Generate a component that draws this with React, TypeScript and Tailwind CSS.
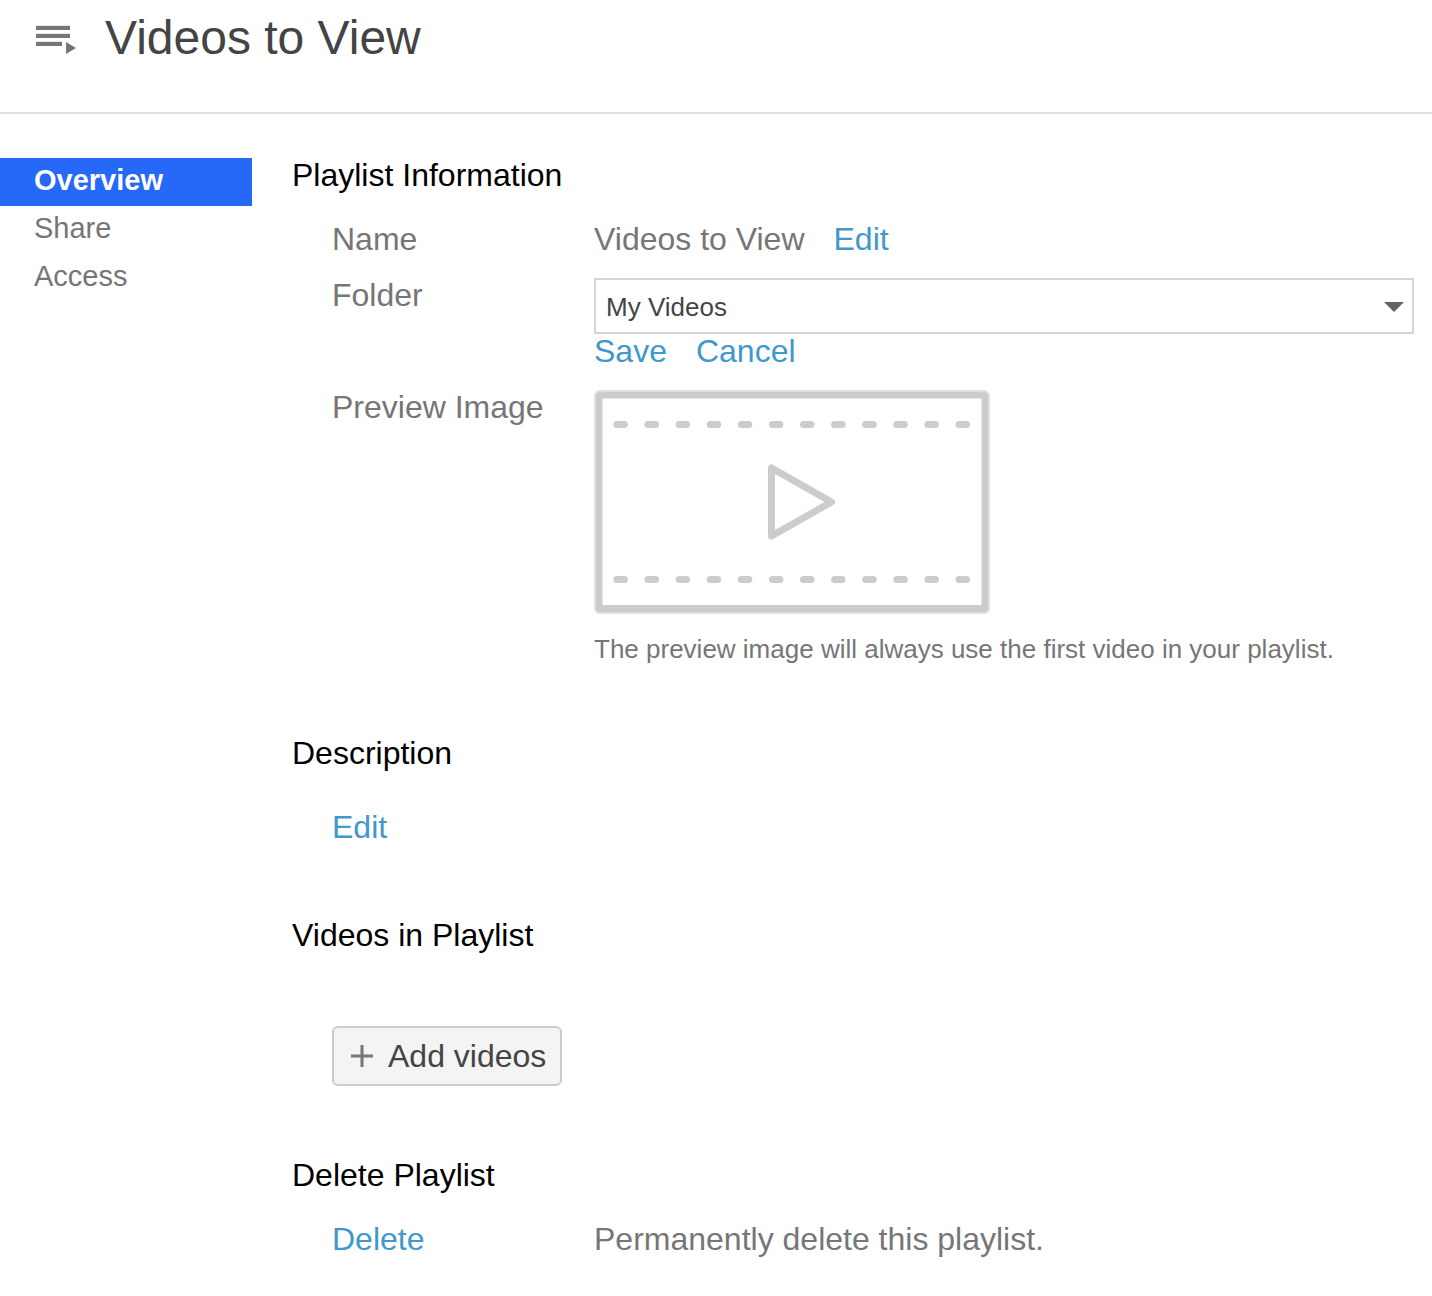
import type { ReactNode } from "react";

const navItems = ["Overview", "Share", "Access"];

const dashes = Array.from({ length: 12 }, (_, i) => 19.4 + i * 31.1);

const PlaylistIcon = () => (
  <svg width="42" height="32" viewBox="0 0 42 32" fill="#767676" aria-hidden="true">
    <rect x="1" y="1.8" width="34" height="4.200" />
    <rect x="1" y="9.8" width="34" height="4.200" />
    <rect x="1" y="17.8" width="26" height="4.200" />
    <path d="M31 18v12l10-6z" />
  </svg>
);

const PreviewPlaceholder = () => (
  <svg
    width="396"
    height="224"
    viewBox="0 0 396 224"
    fill="none"
    role="img"
    aria-label="Playlist preview"
    className="block max-w-full"
  >
    <rect x="1" y="1" width="394" height="222" rx="5" fill="#ccc" stroke="#e0e0e0" strokeWidth="2" />
    <rect x="8.5" y="8.5" width="379" height="206.5" fill="#fff" />
    <g fill="#ccc">
      {dashes.map((x) => (
        <g key={x}>
          <rect x={x} y="31" width="14.5" height="7" rx="3.5" />
          <rect x={x} y="186" width="14.5" height="7" rx="3.5" />
        </g>
      ))}
    </g>
    <path
      d="M177.500 78v68L237.500 112z"
      stroke="#ccc"
      strokeWidth="7"
      strokeLinejoin="round"
    />
  </svg>
);

const TextLink = ({ children }: { children: ReactNode }) => (
  <a href="#" className="text-[#4098cc] hover:underline">
    {children}
  </a>
);

const Row = ({ label, children }: { label: ReactNode; children: ReactNode }) => (
  <div className="flex pl-10">
    <div className="w-[262px] shrink-0">{label}</div>
    <div className="min-w-0 flex-1">{children}</div>
  </div>
);

const Heading = ({ children }: { children: ReactNode }) => (
  <h2 className="text-black">{children}</h2>
);

export default function App() {
  return (
    <div className="min-h-screen bg-white font-['Liberation_Sans',Arial,sans-serif] text-[#767676]">
      <header className="flex h-[114px] items-start gap-7 border-b-2 border-[#e0e0e0] pt-2 pl-[35px]">
        <div className="pt-4">
          <PlaylistIcon />
        </div>
        <h1 className="text-[48px] leading-[60px] text-[#444]">Videos to View</h1>
      </header>

      <div className="flex pt-11">
        <nav className="w-[252px] shrink-0 text-[29px] leading-[44px]">
          {navItems.map((item, i) => (
            <a
              key={item}
              href="#"
              aria-current={i === 0 ? "page" : undefined}
              className={
                i === 0
                  ? "block bg-[#2668f8] pb-1 pl-[34px] font-bold text-white"
                  : "block pb-1 pl-[34px]"
              }
            >
              {item}
            </a>
          ))}
        </nav>

        <main className="flex min-w-0 flex-1 flex-col gap-[72px] pr-[18px] pb-8 pl-10 text-[32px] leading-[34px]">
          <section>
            <Heading>Playlist Information</Heading>
            <div className="mt-[30px] flex flex-col gap-[22px]">
              <Row label="Name">
                <div className="flex gap-[29px]">
                  <span>Videos to View</span>
                  <TextLink>Edit</TextLink>
                </div>
              </Row>
              <Row label={<label htmlFor="folder">Folder</label>}>
                <div className="relative">
                  <select
                    id="folder"
                    className="block h-14 w-full appearance-none rounded-none border-2 border-[#d4d4d4] bg-white px-[10px] pt-0.5 text-[26px] leading-[30px] text-[#444]"
                  >
                    <option>My Videos</option>
                  </select>
                  <svg
                    width="20"
                    height="10"
                    viewBox="0 0 20 10"
                    className="pointer-events-none absolute top-6 right-[10px]"
                    aria-hidden="true"
                  >
                    <path d="M0 0h20L10 10z" fill="#646464" />
                  </svg>
                </div>
                <div className="flex gap-[29px]">
                  <TextLink>Save</TextLink>
                  <TextLink>Cancel</TextLink>
                </div>
              </Row>
              <Row label="Preview Image">
                <PreviewPlaceholder />
                <p className="mt-5 text-[26px] leading-[30px]">
                  The preview image will always use the first video in your playlist.
                </p>
              </Row>
            </div>
          </section>

          <section className="pb-0.5">
            <Heading>Description</Heading>
            <div className="mt-10 pl-10">
              <TextLink>Edit</TextLink>
            </div>
          </section>

          <section>
            <Heading>Videos in Playlist</Heading>
            <div className="mt-[74px] pl-10">
              <button
                type="button"
                className="flex h-[60px] items-center gap-[15px] rounded-md border-2 border-[#ccc] bg-[#f4f4f4] pr-[14px] pl-[17px] text-[#444]"
              >
                <svg width="22" height="22" viewBox="0 0 22 22" aria-hidden="true">
                  <path d="M0 11h22M11 0v22" stroke="#767676" strokeWidth="3" />
                </svg>
                <span>Add videos</span>
              </button>
            </div>
          </section>

          <section>
            <Heading>Delete Playlist</Heading>
            <div className="mt-[30px]">
              <Row label={<TextLink>Delete</TextLink>}>Permanently delete this playlist.</Row>
            </div>
          </section>
        </main>
      </div>
    </div>
  );
}
